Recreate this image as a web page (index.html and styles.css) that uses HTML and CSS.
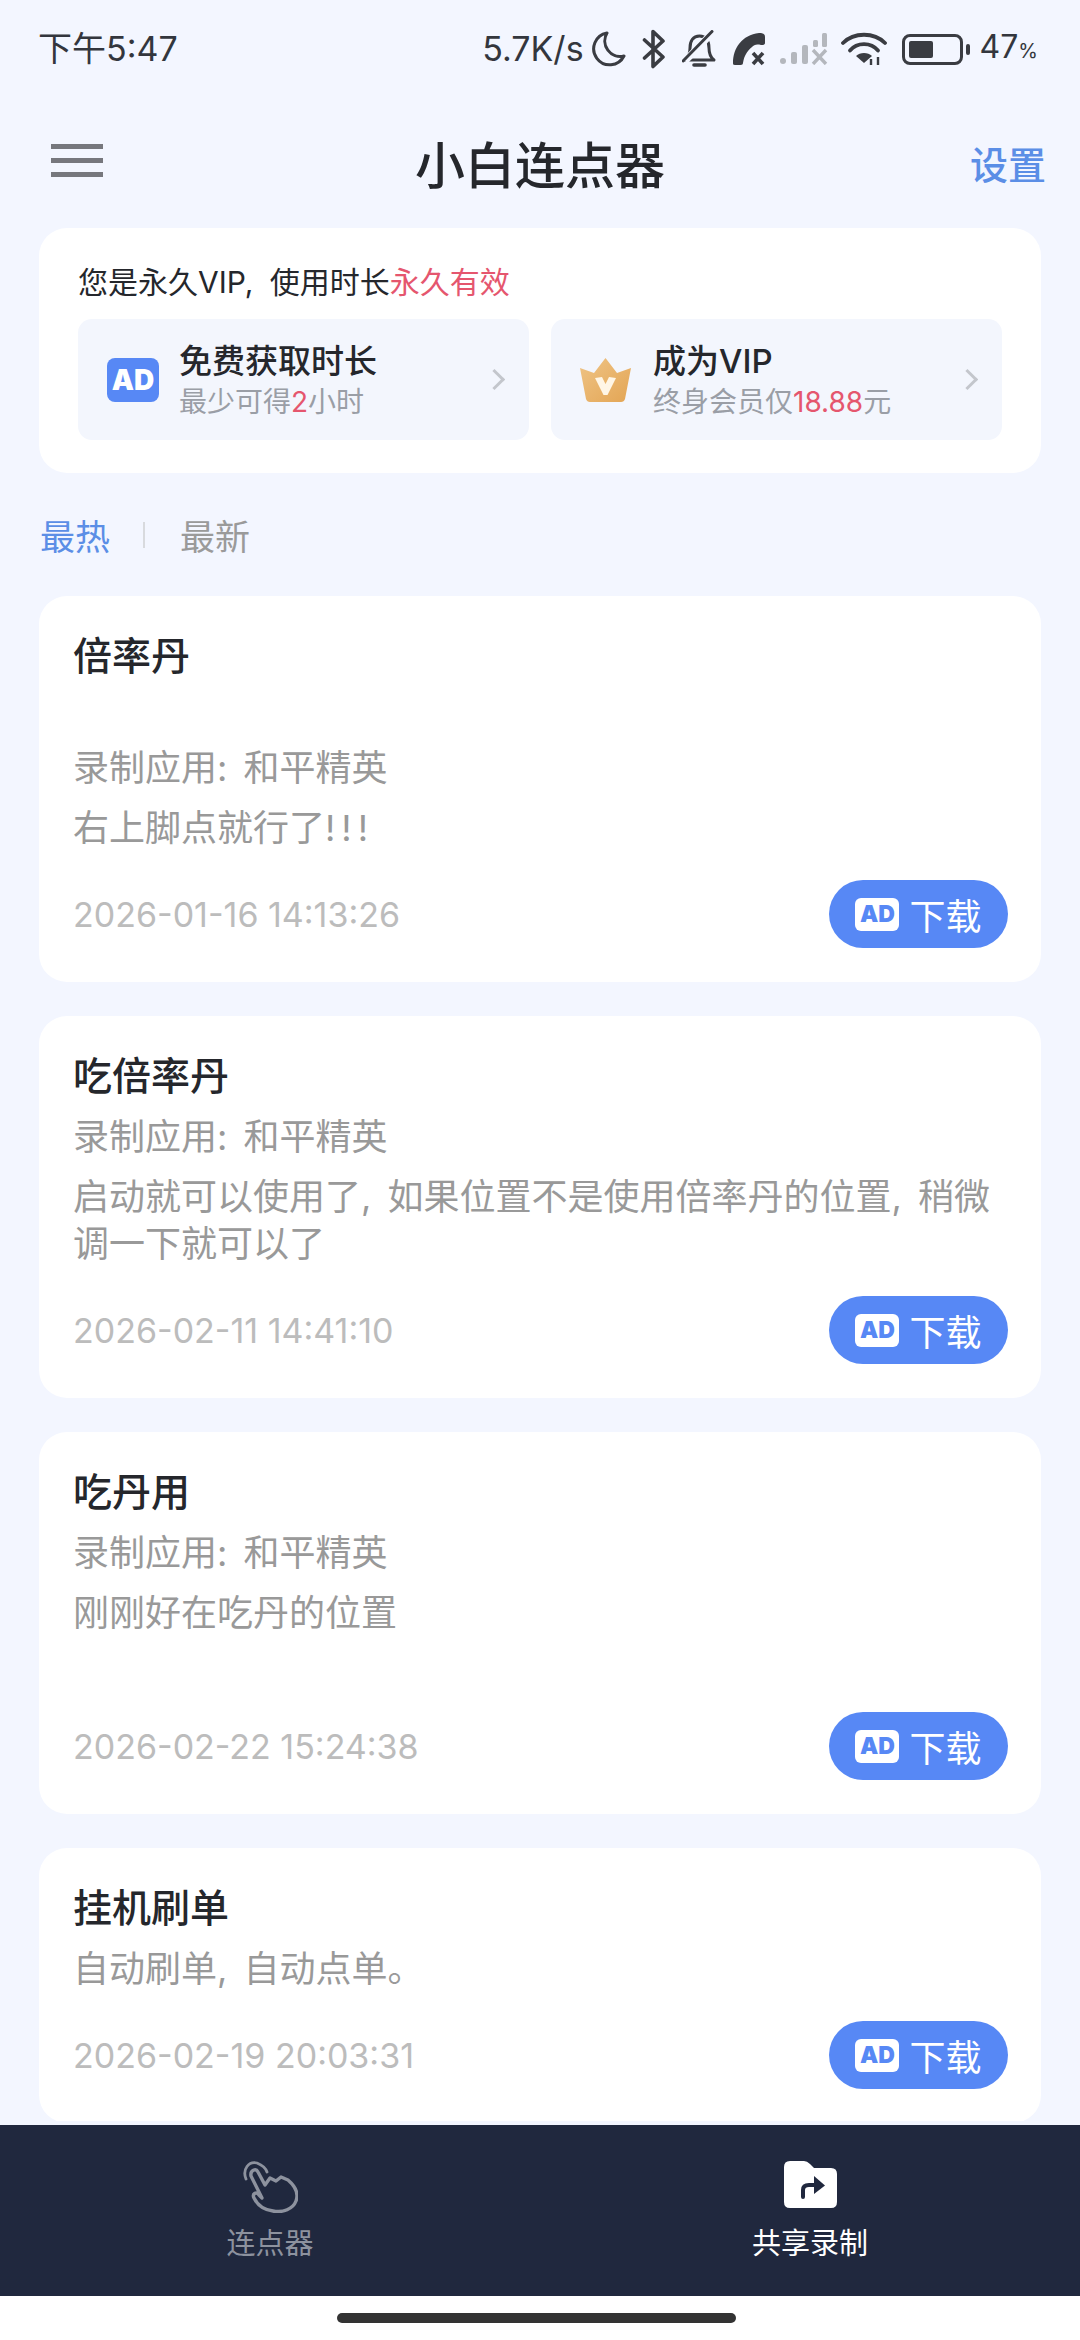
FILE: index.html
```html
<!DOCTYPE html>
<html lang="zh-CN">
<head>
    <meta charset="UTF-8">
    <meta name="viewport" content="width=device-width, initial-scale=1.0">
    <title>小白连点器</title>
    <link rel="stylesheet" href="styles.css">
</head>
<body>
    <div class="phone">
        <div class="status-bar">
            <span class="status-time">下午5:47</span>
            <div class="status-right">
                <span class="status-speed">5.7K/s</span>
                <svg class="ic-moon" viewBox="0 0 34 36"><path d="M15 2 A16 16 0 1 0 32 25 A15.500 15.500 0 0 1 15 2Z" fill="none" stroke="#3a3c42" stroke-width="3" stroke-linejoin="round"/></svg>
                <svg class="ic-bt" viewBox="0 0 24 40"><path d="M2.500 11 L21 28 L11 37.500 V2.500 L21 12 L2.500 29" fill="none" stroke="#3a3c42" stroke-width="3.600" stroke-linejoin="round" stroke-linecap="round"/></svg>
                <svg class="ic-bell" viewBox="0 0 35 38"><path d="M3 30 C7 27 8 23 8 18 C8 11 11 6 17.500 6 C24 6 27 11 27 18 C27 23 28 27 32 30 Z" fill="none" stroke="#3a3c42" stroke-width="3" stroke-linejoin="round"/><path d="M12 35 H23" stroke="#3a3c42" stroke-width="3.600" stroke-linecap="round"/><path d="M3 31 L31 2" stroke="#f3f6ff" stroke-width="7"/><path d="M1 31 L30 1.500" stroke="#3a3c42" stroke-width="3" stroke-linecap="round"/></svg>
                <svg class="ic-call" viewBox="0 0 34 34"><path d="M1 31 C1 16 10 3 27 1 C31 1 33 2 33 5 V11 C33 13 31 13 29 13 C24 12 22 13 20 15 C15 19 12 24 11 31 C11 33 9 33 7 33 H3 C1 33 1 32 1 31Z" fill="#3a3c42"/><path d="M21 21 L31 32 M31 21 L21 32" stroke="#3a3c42" stroke-width="3.600"/></svg>
                <svg class="ic-signal" viewBox="0 0 48 32"><g fill="#b4b7bd"><rect x="0" y="25" width="6" height="6" rx="3"/><rect x="11" y="19" width="6" height="12" rx="2"/><rect x="22" y="12" width="6" height="19" rx="2"/><rect x="33" y="7" width="5" height="7" rx="1.500"/><rect x="42" y="0" width="5" height="14" rx="1.500"/></g><path d="M33 17 L46 31 M46 17 L33 31" stroke="#b4b7bd" stroke-width="3.400"/></svg>
                <svg class="ic-wifi" viewBox="0 0 46 34"><g fill="none" stroke="#3a3c42" stroke-width="3.800" stroke-linecap="round"><path d="M2 11 C13 0 33 0 44 11"/><path d="M9 18.500 C16 10 30 10 37 18.500"/></g><path d="M15 24 C19 20 27 20 31 24 L23 31Z" fill="#3a3c42"/><path d="M30 27 V33 M37 25 V33" stroke="#3a3c42" stroke-width="2.400"/></svg>
                <div class="battery"><div class="battery-body"><div class="battery-fill"></div></div><div class="battery-nub"></div></div>
                <span class="status-pct">47<small>%</small></span>
            </div>
        </div>

        <div class="app-bar">
            <div class="menu-icon"><span></span><span></span><span></span></div>
            <h1>小白连点器</h1>
            <span class="settings">设置</span>
        </div>

        <div class="vip-card">
            <p class="vip-line">您是永久VIP, 使用时长<em>永久有效</em></p>
            <div class="vip-options">
                <div class="vip-option">
                    <div class="ad-logo">AD</div>
                    <div class="vip-text">
                        <strong>免费获取时长</strong>
                        <span>最少可得<em class="num">2</em>小时</span>
                    </div>
                    <span class="chevron"></span>
                </div>
                <div class="vip-option">
                    <svg class="crown" viewBox="0 0 51 44">
                        <defs><linearGradient id="gold" x1="0" y1="0" x2="1" y2="1"><stop offset="0" stop-color="#efc486"/><stop offset="1" stop-color="#e3a554"/></linearGradient></defs>
                        <path d="M0 10 L14 15 L25.500 0 L37 15 L51 10 L45 41 Q44 44 41 44 H10 Q7 44 6 41 Z" fill="url(#gold)"/>
                        <path d="M15 20 L22 19 L25.500 26 L29 19 L36 20 L27.500 37 H23.500 Z" fill="#fff6e6"/>
                    </svg>
                    <div class="vip-text">
                        <strong>成为VIP</strong>
                        <span>终身会员仅<em class="num">18.88</em>元</span>
                    </div>
                    <span class="chevron"></span>
                </div>
            </div>
        </div>

        <div class="tabs">
            <span class="tab active">最热</span>
            <i class="tab-sep"></i>
            <span class="tab">最新</span>
        </div>

        <div class="list">
            <div class="card">
                <h3>倍率丹<br>&nbsp;</h3>
                <p class="meta">录制应用: 和平精英</p>
                <p class="desc">右上脚点就行了<span class="bang">!!!</span></p>
                <div class="card-foot">
                    <span class="date">2026-01-16 14:13:26</span>
                    <div class="dl-btn"><span class="ad-mini">AD</span>下载</div>
                </div>
            </div>
            <div class="card">
                <h3>吃倍率丹</h3>
                <p class="meta">录制应用: 和平精英</p>
                <p class="desc">启动就可以使用了, 如果位置不是使用倍率丹的位置, 稍微调一下就可以了</p>
                <div class="card-foot">
                    <span class="date">2026-02-11 14:41:10</span>
                    <div class="dl-btn"><span class="ad-mini">AD</span>下载</div>
                </div>
            </div>
            <div class="card">
                <h3>吃丹用</h3>
                <p class="meta">录制应用: 和平精英</p>
                <p class="desc">刚刚好在吃丹的位置<br>&nbsp;</p>
                <div class="card-foot">
                    <span class="date">2026-02-22 15:24:38</span>
                    <div class="dl-btn"><span class="ad-mini">AD</span>下载</div>
                </div>
            </div>
            <div class="card">
                <h3>挂机刷单</h3>
                <p class="desc">自动刷单, 自动点单。</p>
                <div class="card-foot">
                    <span class="date">2026-02-19 20:03:31</span>
                    <div class="dl-btn"><span class="ad-mini">AD</span>下载</div>
                </div>
            </div>
        </div>

        <div class="bottom-nav">
            <div class="nav-item">
                <svg viewBox="0 0 55 52" class="nav-icon"><g fill="none" stroke="#8d929e" stroke-linecap="round" stroke-linejoin="round"><path d="M3 18 C-1 8 6 0 14 2 C19 4 23 8 24 11" stroke-width="2.800"/><path d="M8 15 C7 9 13 7 15 11 L22 24 L27 17 L33 20 L38 16 L45 19 C52 25 56 32 53 40 C50 48 40 52 30 50 C22 49 15 45 11 37 C9 33 13 30 16 34 L19 37 Z" stroke-width="3.400"/></g></svg>
                <span class="nav-label">连点器</span>
            </div>
            <div class="nav-item active">
                <svg viewBox="0 0 53 47" class="nav-icon folder"><path d="M0 6 Q0 0 6 0 H20 Q23 0 26 3 L30 7 H47 Q53 7 53 13 V41 Q53 47 47 47 H6 Q0 47 0 41 Z" fill="#fff"/><path d="M19 36 V29 Q19 24 25 24 H32" fill="none" stroke="#20283e" stroke-width="4" stroke-linecap="round"/><path d="M30 15 L41 24.500 L30 33 Z" fill="#20283e"/></svg>
                <span class="nav-label">共享录制</span>
            </div>
        </div>
        <div class="home-area"><div class="home-bar"></div></div>
    </div>
</body>
</html>
```
FILE: styles.css
```css
* {
    box-sizing: border-box;
}
body {
    margin: 0;
    font-family: Inter, "Noto Sans CJK SC", sans-serif;
    background-color: #f3f6ff;
}
h1, h3, p {
    margin: 0;
    font-weight: normal;
}
em {
    font-style: normal;
}
.phone {
    width: 1080px;
    height: 2340px;
    display: flex;
    flex-direction: column;
    overflow: hidden;
}
.status-bar {
    height: 100px;
    flex: none;
    padding: 29px 42px 0 38px;
    display: flex;
    justify-content: space-between;
    align-items: flex-start;
    color: #33363d;
    font-size: 34px;
    line-height: 40px;
}
.status-right {
    display: flex;
    align-items: center;
    height: 40px;
}
.status-speed {
    margin-right: 8px;
}
.ic-moon { width: 34px; height: 36px; margin-right: 16px; }
.ic-bt { width: 24px; height: 40px; margin-right: 16px; }
.ic-bell { width: 35px; height: 38px; margin-right: 15px; }
.ic-call { width: 34px; height: 34px; margin-right: 14px; }
.ic-signal { width: 48px; height: 32px; margin-right: 13px; }
.ic-wifi { width: 46px; height: 34px; margin-right: 15px; }
.battery {
    display: flex;
    align-items: center;
    margin-right: 10px;
}
.battery-body {
    width: 61px;
    height: 31px;
    border: 3px solid #3a3c42;
    border-radius: 8px;
    padding: 4px;
}
.battery-fill {
    width: 24px;
    height: 100%;
    background-color: #3a3c42;
    border-radius: 2px;
}
.battery-nub {
    width: 4px;
    height: 11px;
    margin-left: 3px;
    background-color: #3a3c42;
    border-radius: 2px;
}
.status-pct {
    font-size: 32px;
}
.status-pct small {
    font-size: 20px;
}
.app-bar {
    height: 128px;
    flex: none;
    position: relative;
    display: flex;
    align-items: center;
    justify-content: space-between;
    padding: 0 34px 4px 51px;
}
.app-bar h1 {
    position: absolute;
    left: 0;
    right: 0;
    text-align: center;
    font-size: 50px;
    font-weight: 500;
    color: #25272c;
}
.menu-icon {
    width: 52px;
    display: flex;
    flex-direction: column;
    gap: 9px;
    margin-top: -3px;
}
.menu-icon span {
    height: 5px;
    background-color: #76777d;
}
.settings {
    font-size: 38px;
    font-weight: 500;
    color: #5b8ee6;
}
.vip-card {
    flex: none;
    margin: 0 39px;
    height: 245px;
    background-color: #fff;
    border-radius: 28px;
    padding: 34px 39px 0;
}
.vip-line {
    font-size: 30px;
    line-height: 40px;
    color: #25272c;
    word-spacing: 8px;
}
.vip-line em {
    color: #e5566e;
}
.vip-options {
    display: flex;
    gap: 22px;
    margin-top: 17px;
}
.vip-option {
    flex: 1;
    height: 121px;
    background-color: #f3f6fd;
    border-radius: 14px;
    display: flex;
    align-items: center;
    padding: 0 27px 0 29px;
}
.ad-logo {
    width: 52px;
    height: 44px;
    flex: none;
    background-color: #5788f5;
    border-radius: 8px;
    color: #fff;
    font-size: 28px;
    font-weight: 900;
    line-height: 44px;
    text-align: center;
}
.crown {
    width: 51px;
    height: 44px;
    flex: none;
}
.vip-text {
    flex: 1;
    margin-left: 20px;
    display: flex;
    flex-direction: column;
}
.crown + .vip-text {
    margin-left: 22px;
}
.vip-text strong {
    font-size: 33px;
    font-weight: 500;
    line-height: 44px;
    color: #25272c;
}
.vip-text span {
    font-size: 28px;
    line-height: 38px;
    color: #9a9ea6;
}
.vip-text .num {
    color: #e5566e;
}
.chevron {
    width: 15px;
    height: 15px;
    flex: none;
    border-top: 3px solid #c3c6cc;
    border-right: 3px solid #c3c6cc;
    transform: rotate(45deg);
}
.tabs {
    flex: none;
    height: 123px;
    display: flex;
    align-items: center;
    padding-left: 40px;
}
.tab {
    font-size: 35px;
    color: #9a9a9a;
}
.tab.active {
    color: #5b8ee6;
}
.tab-sep {
    width: 2px;
    height: 26px;
    margin: 0 35px 0 33px;
    background-color: #d8dade;
}
.list {
    flex: 1;
    min-height: 0;
    overflow: hidden;
    padding: 0 39px;
    display: flex;
    flex-direction: column;
    gap: 34px;
}
.card {
    flex: none;
    background-color: #fff;
    border-radius: 28px;
    padding: 34px 33px 34px 34px;
}
.card h3 {
    font-size: 39px;
    font-weight: 500;
    line-height: 51px;
    color: #25272c;
    margin-bottom: 13px;
}
.meta {
    font-size: 36px;
    line-height: 47px;
    color: #999;
    margin-bottom: 13px;
    word-spacing: 6px;
}
.desc {
    font-size: 36px;
    line-height: 47px;
    color: #999;
    word-spacing: 6px;
}
.bang {
    letter-spacing: 6px;
}
.card-foot {
    margin-top: 28px;
    display: flex;
    align-items: center;
    justify-content: space-between;
}
.date {
    font-size: 34px;
    color: #bcbcbc;
}
.dl-btn {
    width: 179px;
    height: 68px;
    background-color: #5788f5;
    border-radius: 34px;
    display: flex;
    align-items: center;
    justify-content: center;
    gap: 10px;
    color: #fff;
    font-size: 36px;
}
.ad-mini {
    width: 44px;
    height: 33px;
    background-color: #fff;
    border-radius: 6px;
    color: #5788f5;
    font-size: 23px;
    font-weight: 900;
    line-height: 33px;
    text-align: center;
}
.bottom-nav {
    flex: none;
    height: 171px;
    margin-top: 4px;
    background-color: #20283e;
    display: flex;
}
.nav-item {
    flex: 1;
    display: flex;
    flex-direction: column;
    align-items: center;
    padding-top: 36px;
    color: #8d929e;
}
.nav-item.active {
    color: #fff;
}
.nav-icon {
    height: 52px;
    width: 55px;
}
.nav-icon.folder {
    width: 53px;
    height: 47px;
    margin-bottom: 5px;
}
.nav-label {
    font-size: 29px;
    line-height: 40px;
    margin-top: 11px;
}
.home-area {
    flex: none;
    height: 44px;
    background-color: #fff;
    padding-top: 17px;
}
.home-bar {
    width: 399px;
    height: 10px;
    margin-left: 337px;
    border-radius: 5px;
    background-color: #333;
}
```
